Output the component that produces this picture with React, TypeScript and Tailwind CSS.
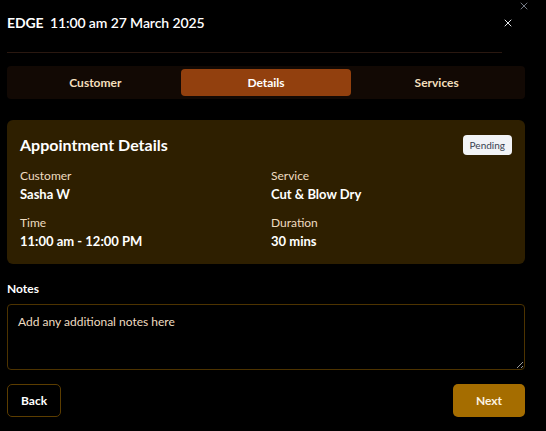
import { X } from 'lucide-react';

export default function App() {
    return (
        <div className="relative w-[546px] h-[431px] bg-black text-white pl-[7px] pr-[21px] font-['Lato',sans-serif] overflow-hidden">
            <button className="absolute right-[16px] top-[0px] text-gray-400">
                <X size={12} strokeWidth={1.5} />
            </button>

            <div className="flex items-center justify-between h-[45px] pt-[1px] pr-[11px]">
                <h2 className="text-[14px] leading-none font-semibold tracking-[-0.1px]">
                    <span className="font-bold mr-[3px]">EDGE</span> 11:00 am 27 March 2025
                </h2>
                <X size={12} strokeWidth={2} className="text-gray-200" />
            </div>

            <div className="h-px bg-[#2a1810] mt-[7px] mr-[23px]" />

            <div className="mt-[13px] h-[33px] rounded-[4px] bg-[#120904] flex items-center px-[3px] text-[12px] font-bold">
                <button className="flex-1 h-[27px] text-[#f3dfbd]">Customer</button>
                <button className="flex-1 h-[27px] rounded-[4px] bg-[#92400e] text-white">Details</button>
                <button className="flex-1 h-[27px] text-[#f3dfbd]">Services</button>
            </div>

            <div className="mt-[21px] rounded-[6px] bg-[#2e1f00] px-[13px] pt-[14px] pb-[14px]">
                <div className="flex items-center justify-between">
                    <h3 className="text-[16px] font-bold leading-[22px]">Appointment Details</h3>
                    <span className="rounded-[4px] bg-[#f1f3f6] text-[#374151] text-[10px] leading-none px-[7px] py-[5px]">Pending</span>
                </div>
                <div className="grid grid-cols-2 gap-x-[10px] gap-y-[12px] mt-[12px]">
                    <Field label="Customer" value="Sasha W" />
                    <Field label="Service" value="Cut & Blow Dry" />
                    <Field label="Time" value="11:00 am - 12:00 PM" />
                    <Field label="Duration" value="30 mins" />
                </div>
            </div>

            <label className="block mt-[16px] text-[12px] font-bold leading-[18px]">Notes</label>
            <textarea
                placeholder="Add any additional notes here"
                className="mt-[6px] block w-full h-[66px] rounded-[4px] border border-[#4d3300] bg-black px-[10px] py-[8px] text-[12px] placeholder:text-[#efdcc0] outline-none"
            />

            <div className="flex justify-between mt-[14px]">
                <button className="h-[33px] px-[13px] rounded-[5px] border border-[#5c3d00] text-[12px] font-bold">Back</button>
                <button className="h-[33px] w-[72px] rounded-[5px] bg-[#a56d00] text-[12px] font-bold text-[#fbf3e0]">Next</button>
            </div>
        </div>
    );
}

function Field({ label, value }: { label: string; value: string }) {
    return (
        <div>
            <div className="text-[12px] leading-[16px] text-[#efdcc0]">{label}</div>
            <div className="text-[13px] leading-[18px] font-bold mt-[1px]">{value}</div>
        </div>
    );
}
